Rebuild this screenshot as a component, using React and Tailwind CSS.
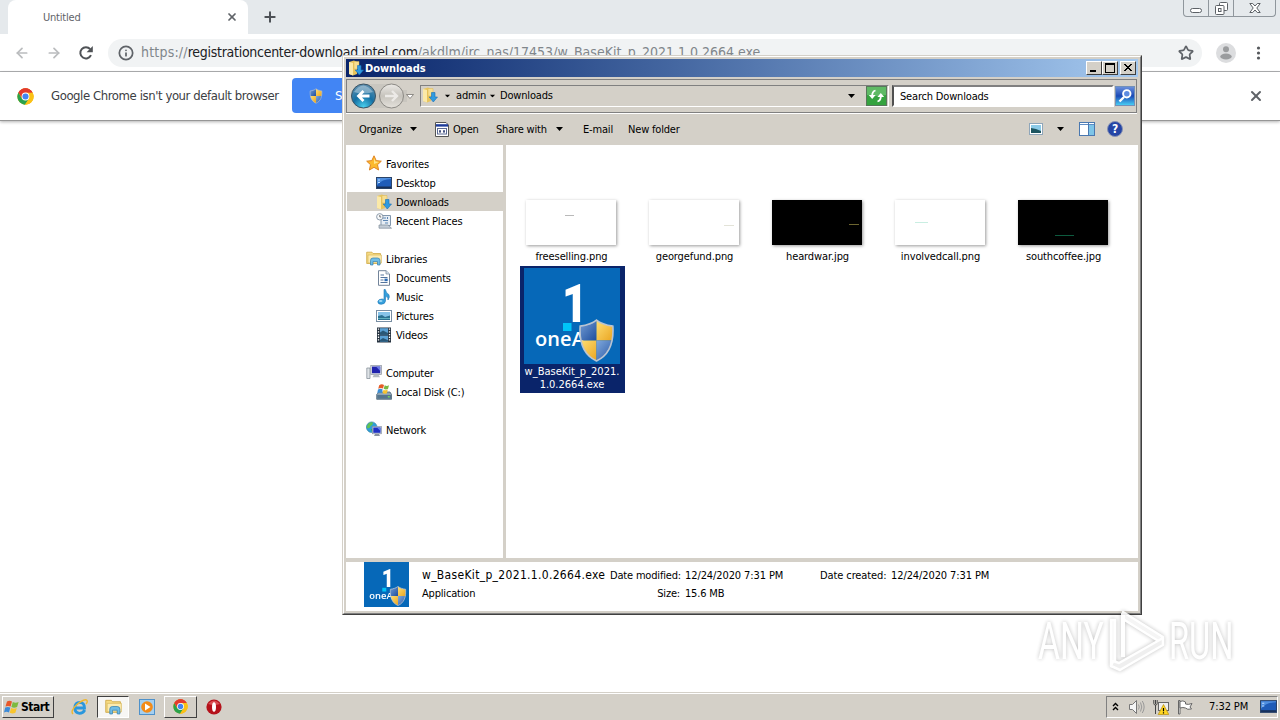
import { ArrowLeft, ArrowRight, Info, Plus, RotateCw, Star, X } from 'lucide-react';

const favorites = [
  { icon: DesktopIcon, label: 'Desktop' },
  { icon: DownloadsIcon, label: 'Downloads', active: true },
  { icon: RecentIcon, label: 'Recent Places' },
];

const libraries = [
  { icon: DocumentIcon, label: 'Documents' },
  { icon: MusicIcon, label: 'Music' },
  { icon: PictureIcon, label: 'Pictures' },
  { icon: VideoIcon, label: 'Videos' },
];

const navGroups = [
  { icon: FavoritesIcon, label: 'Favorites', items: favorites },
  { icon: LibrariesIcon, label: 'Libraries', items: libraries },
  { icon: ComputerIcon, label: 'Computer', items: [{ icon: DiskIcon, label: 'Local Disk (C:)' }] },
  { icon: NetworkIcon, label: 'Network', items: [] },
];

const images = [
  { name: 'freeselling.png', dark: false, mark: 'left-[39px] top-[15px] w-[9px] bg-[#b9b9b9]' },
  { name: 'georgefund.png', dark: false, mark: 'left-[75px] top-[25px] w-[10px] bg-[#e3e3d8]' },
  { name: 'heardwar.jpg', dark: true, mark: 'left-[77px] top-[24px] w-[10px] bg-[#6d6530]' },
  { name: 'involvedcall.png', dark: false, mark: 'left-[20px] top-[22px] w-[13px] bg-[#c9eee2]' },
  { name: 'southcoffee.jpg', dark: true, mark: 'left-[37px] top-[35px] w-[19px] bg-[#0d5a3e]' },
];

function ShieldIcon({ className }) {
  return (
    <svg className={className} viewBox="0 0 36 44" aria-hidden="true">
      <defs>
        <clipPath id="shield">
          <path d="M18 2C13 6 8 7 2 8C1 24 5 36 18 42C31 36 35 24 34 8C28 7 23 6 18 2Z" />
        </clipPath>
        <linearGradient id="shieldBlue" x1="0" y1="0" x2="1" y2="1">
          <stop offset="0" stopColor="#7fa8dc" />
          <stop offset="1" stopColor="#1f4e9e" />
        </linearGradient>
        <linearGradient id="shieldGold" x1="0" y1="0" x2="1" y2="1">
          <stop offset="0" stopColor="#ffe27a" />
          <stop offset="1" stopColor="#e9a21c" />
        </linearGradient>
      </defs>
      <g clipPath="url(#shield)">
        <rect width="18" height="22" fill="url(#shieldBlue)" />
        <rect x="18" width="18" height="22" fill="url(#shieldGold)" />
        <rect y="22" width="18" height="22" fill="url(#shieldGold)" />
        <rect x="18" y="22" width="18" height="22" fill="url(#shieldBlue)" />
        <path d="M0 8Q14 8 18 2L20 0H0Z" fill="#fff" opacity=".25" />
      </g>
      <path
        d="M18 2C13 6 8 7 2 8C1 24 5 36 18 42C31 36 35 24 34 8C28 7 23 6 18 2Z"
        fill="none"
        stroke="#b9c4d2"
        strokeWidth="1.6"
      />
    </svg>
  );
}

function ChromeIcon({ className }) {
  return (
    <svg className={className} viewBox="0 0 48 48" aria-hidden="true">
      <circle cx="24" cy="24" r="23" fill="#fbc116" />
      <path d="M24 24L4.1 12.5A23 23 0 0 1 43.9 12.5H24Z" fill="#e33b2e" />
      <path d="M4.1 12.5A23 23 0 0 0 22.5 47L34 29.5L24 24L14 30Z" fill="#2aa24c" />
      <path d="M43.9 12.5A23 23 0 0 1 22.5 47L34 30L30 14Z" fill="#fbc116" />
      <path d="M4.1 12.5A23 23 0 0 1 43.9 12.5H24L14 29Z" fill="#e33b2e" />
      <circle cx="24" cy="24" r="11" fill="#fff" />
      <circle cx="24" cy="24" r="8.6" fill="#4385f2" />
    </svg>
  );
}

function DownloadsIcon({ className }) {
  return (
    <svg className={className} viewBox="0 0 16 16" aria-hidden="true">
      <path d="M1 2L6 .5L9 2V14L5 15.5L1 14Z" fill="#e9c55c" />
      <path d="M1 2L5 3V15.5L1 14Z" fill="#fbe9a8" />
      <path d="M6 1.5H11V9H6Z" fill="#f7de90" stroke="#d9b552" strokeWidth=".5" />
      <path d="M9.5 5.5H13V10H15.5L11.3 15L7.2 10H9.5Z" fill="#2f9be0" stroke="#1a6fb5" strokeWidth=".6" />
    </svg>
  );
}

function DesktopIcon({ className }) {
  return (
    <svg className={className} viewBox="0 0 16 16" aria-hidden="true">
      <rect x=".5" y="2.5" width="15" height="11" fill="#1f5cb8" stroke="#2b4468" />
      <path d="M1 10Q6 4 15 4V3H1Z" fill="#4f8fe0" />
      <path d="M2 5H4M2 7.5H4" stroke="#bcdcff" />
      <rect x="1" y="11.5" width="14" height="1.6" fill="#182e55" />
    </svg>
  );
}

function RecentIcon({ className }) {
  return (
    <svg className={className} viewBox="0 0 16 16" aria-hidden="true">
      <path d="M5 2.5H14.5V12.5H5Z" fill="#e6edf4" stroke="#8297ad" />
      <path d="M7 5H10M7 7.5H12M9 10H12M11.5 4V6" stroke="#5c86b4" />
      <path d="M3 12H12L15.5 15.2H3Z" fill="#c3ccd6" stroke="#808c99" strokeWidth=".7" />
      <circle cx="3.8" cy="3.8" r="3.2" fill="#f7f9fb" stroke="#8e9cab" />
      <path d="M3.8 2V4H5.2" fill="none" stroke="#555" strokeWidth=".8" />
    </svg>
  );
}

function FavoritesIcon({ className }) {
  return (
    <svg className={className} viewBox="0 0 16 16" aria-hidden="true">
      <path
        d="M8 .8L10.2 5.6L15.3 6.2L11.5 9.7L12.6 15L8 12.3L3.4 15L4.5 9.7L.7 6.2L5.8 5.6Z"
        fill="#fcb92c"
        stroke="#e08524"
        strokeWidth="1"
        strokeLinejoin="round"
      />
      <path d="M8 3L9.3 6.6L13 7L8 9Z" fill="#ffe48c" />
    </svg>
  );
}

function LibrariesIcon({ className }) {
  return (
    <svg className={className} viewBox="0 0 16 16" aria-hidden="true">
      <path d="M.7 2.2H6L7 3.5H14.5V13.5H.7Z" fill="#f7dc83" stroke="#cfa846" strokeWidth=".8" />
      <path d="M2 5H15.4V13H2Z" fill="#fcebb0" stroke="#d8b75c" strokeWidth=".7" />
      <path d="M4.5 15V10.5Q4.5 8 7 8H11.5Q14 8 14 10.5V15H11.5V11.5H7V15Z" fill="#6fbde6" stroke="#3580b0" strokeWidth=".7" />
    </svg>
  );
}

function DocumentIcon({ className }) {
  return (
    <svg className={className} viewBox="0 0 16 16" aria-hidden="true">
      <path d="M2.5 .7H10L13.5 4V15.3H2.5Z" fill="#fff" stroke="#73849a" />
      <path d="M10 .7V4H13.5" fill="#d7e2ee" stroke="#73849a" strokeWidth=".7" />
      <path d="M4.5 5H8M4.5 7.5H11.5M4.5 10H7.5M4.5 12.5H11.5" stroke="#54749c" />
      <rect x="8.5" y="8.6" width="3.2" height="2.6" fill="#2d6cb5" />
    </svg>
  );
}

function MusicIcon({ className }) {
  return (
    <svg className={className} viewBox="0 0 16 16" aria-hidden="true">
      <path
        d="M8 .5H9.3Q10 4 12.8 5.5Q14.2 8 12 11Q12.5 7.8 9.5 7.3V12Q9 15.2 5.3 15.3Q1.7 15.2 1.8 12.7Q2.4 10 6 10Q7.2 10 8 10.5Z"
        fill="#369fdb"
        stroke="#1d75b6"
        strokeWidth=".6"
      />
      <ellipse cx="4.7" cy="12" rx="1.8" ry="1" fill="#9dd8f5" />
    </svg>
  );
}

function PictureIcon({ className }) {
  return (
    <svg className={className} viewBox="0 0 16 16" aria-hidden="true">
      <rect x=".5" y="2.5" width="15" height="11" fill="#fff" stroke="#788ea3" />
      <rect x="2" y="4" width="12" height="8" fill="#86c3e8" />
      <path d="M2 8L6 7L9 9L14 7.5V12H2Z" fill="#2a7191" />
      <path d="M2 10.5H14" stroke="#5fb0bf" />
    </svg>
  );
}

function VideoIcon({ className }) {
  return (
    <svg className={className} viewBox="0 0 16 16" aria-hidden="true">
      <rect x="1" y=".5" width="14" height="15" fill="#263340" />
      <rect x="4" y="1.2" width="8" height="6.2" fill="#5aa0d4" />
      <rect x="4" y="8.6" width="8" height="6.2" fill="#5aa0d4" />
      <path d="M4 5.5L7 3.5L12 6V7.4H4ZM4 13L7 11L12 13.3V14.8H4Z" fill="#285777" />
      <path d="M2.5 1.5V15M13.5 1.5V15" stroke="#fff" strokeWidth="1.3" strokeDasharray="1.3 1.4" />
    </svg>
  );
}

function ComputerIcon({ className }) {
  return (
    <svg className={className} viewBox="0 0 16 16" aria-hidden="true">
      <path d="M.8 4H4V14.5H.8Z" fill="#dfe3e7" stroke="#7d8791" strokeWidth=".7" />
      <rect x="4.8" y="1.5" width="10.7" height="9" fill="#d5d9e0" stroke="#8b93a0" strokeWidth=".7" />
      <rect x="6" y="2.6" width="8.2" height="6.6" fill="#2123ae" />
      <path d="M10 2.6H14.2V7Z" fill="#6c7ae6" />
      <path d="M8 10.6H12.5L14 13.3H6.5Z" fill="#b4bac2" />
    </svg>
  );
}

function DiskIcon({ className }) {
  return (
    <svg className={className} viewBox="0 0 16 16" aria-hidden="true">
      <path d="M.7 10.5L3 8H14L15.5 10.5V15.3H.7Z" fill="#8fa5b5" stroke="#4c6375" strokeWidth=".8" />
      <rect x="1.2" y="11" width="13.8" height="3.8" fill="#55758d" />
      <rect x="11.8" y="12.2" width="2" height="1.2" fill="#77e653" />
      <path d="M3.2 1.2Q5.7 -.5 8 .9L7 4.5Q4.5 3.3 2.2 4.7Z" fill="#e65c27" />
      <path d="M8.8 1.3Q10.8 2.6 13 1.3L12 5Q9.7 6 7.7 4.8Z" fill="#79b844" />
      <path d="M2 5.5Q4.4 4.2 6.7 5.4L5.8 9Q3.5 7.8 1.2 9.2Z" fill="#3b8fd6" />
      <path d="M7.5 5.7Q9.7 6.9 11.8 5.6L10.9 9.2Q8.6 10.3 6.6 9.1Z" fill="#f7c32f" />
    </svg>
  );
}

function NetworkIcon({ className }) {
  return (
    <svg className={className} viewBox="0 0 16 16" aria-hidden="true">
      <circle cx="5.7" cy="6.2" r="5.3" fill="#2f9fd8" stroke="#2c7b9e" strokeWidth=".6" />
      <path d="M2.5 2.5Q5 .5 7 1.5Q7 4 4.5 5Q4 8 1 7Q.8 4.3 2.5 2.5Z" fill="#5fc255" />
      <path d="M5 8L8 8.5L6 11Z" fill="#3aa24f" />
      <rect x="6.3" y="5.5" width="9.2" height="7.3" fill="#cfd6e2" stroke="#7e899c" strokeWidth=".6" />
      <rect x="7.3" y="6.5" width="7.2" height="5.3" fill="#2030c4" />
      <path d="M11 6.5H14.5V10Z" fill="#6584ec" />
      <path d="M9 13H13L14 15H8Z" fill="#8992a0" />
    </svg>
  );
}

function WindowsFlag({ className }) {
  return (
    <svg className={className} viewBox="0 0 16 16" aria-hidden="true">
      <path d="M3 2.6Q5.4 1 8 2.6L6.6 7.6Q4 6.3 1.5 7.6Z" fill="#e8582a" />
      <path d="M8.8 3Q11.4 4.5 14.6 3L13.1 8Q10 9.5 7.4 8Z" fill="#7dba3e" />
      <path d="M1.2 8.6Q3.8 7.2 6.3 8.6L5 13.4Q2.4 12.2 0 13.4Z" fill="#3c8bd8" />
      <path d="M7.1 9Q9.8 10.4 12.8 9L11.4 13.8Q8.6 15.4 5.8 13.8Z" fill="#f9c52c" />
    </svg>
  );
}

function Caret({ className = '' }) {
  return (
    <svg className={`h-1 w-[7px] shrink-0 ${className}`} viewBox="0 0 7 4" aria-hidden="true">
      <path d="M0 0H7L3.5 4Z" fill="#000" />
    </svg>
  );
}

function OneApiIcon({ small }) {
  return (
    <div className={small ? 'h-[45px] w-[45px] overflow-hidden' : 'h-24 w-24'}>
      <div className={small ? 'relative h-24 w-24 origin-top-left scale-[.469] bg-[#0668b8]' : 'relative h-24 w-24 bg-[#0668b8]'}>
        <svg className="absolute inset-0 h-24 w-24" viewBox="0 0 96 96" aria-hidden="true">
          {/* light blue square under the numeral */}
          <rect x="39" y="55" width="8.5" height="8" fill="#00c4f8" />
        </svg>
        <span className="absolute top-[16px] left-[38px] font-['Roboto'] text-[54px] leading-[40px] font-black text-white origin-left scale-x-[.82]">1</span>
        <span className="absolute top-[61px] left-[11px] font-['Open_Sans'] text-[20px] leading-[20px] font-semibold tracking-[0.1px] text-white">
          oneA
        </span>
        <ShieldIcon className="absolute top-[50px] left-[54px] h-[45px] w-[37px]" />
      </div>
    </div>
  );
}

function ChromeWindow() {
  return (
    <div>
      {/* Tab strip */}
      <div className="flex h-[34px] bg-[#e5e9ec]">
        <div className="ml-2 flex h-[34px] w-60 items-center rounded-t-lg bg-white pr-[10px] pl-[35px]">
          <span className="flex-1 pt-[2px] text-[11px] tracking-[-0.2px] text-[#5f6368]">Untitled</span>
          <X className="h-3 w-3 text-[#5f6368]" strokeWidth={3.5} />
        </div>
        <Plus className="mt-[9px] ml-[14px] h-4 w-4 text-[#4d5156]" strokeWidth={3} />
        <div className="mr-[4px] ml-auto flex h-[17px] w-[93px] rounded-b border border-t-0 border-[#8f969c]">
          <div className="flex w-[25px] items-end justify-center border-r border-[#8f969c] pb-[3px]">
            <div className="h-[5px] w-3 rounded-sm border border-[#5c6166] bg-white" />
          </div>
          <div className="flex w-[25px] items-center justify-center border-r border-[#8f969c]">
            <svg className="h-[13px] w-[13px]" viewBox="0 0 13 13" fill="#fff" stroke="#5c6166">
              <rect x="4.5" y=".5" width="8" height="8" rx="1" />
              <rect x=".5" y="3.5" width="8.5" height="9" rx="1" />
              <rect x="3.5" y="6.5" width="2.5" height="3" />
            </svg>
          </div>
          <div className="flex flex-1 items-center justify-center">
            <svg className="h-[10px] w-3" viewBox="0 0 12 10" fill="#fff" stroke="#5c6166">
              <path d="M.8 .5H3.7L6 3L8.3 .5H11.2L7.8 5L11.2 9.5H8.3L6 7L3.7 9.5H.8L4.2 5Z" />
            </svg>
          </div>
        </div>
      </div>

      {/* Address bar */}
      <div className="flex h-[38px] items-center border-b border-[#b0b2b4] bg-white pl-[14px]">
        <ArrowLeft className="h-4 w-4 text-[#babcbe]" strokeWidth={2.6} />
        <ArrowRight className="ml-4 h-4 w-4 text-[#babcbe]" strokeWidth={2.6} />
        <svg className="ml-4 h-4 w-4" viewBox="0 0 16 16" aria-hidden="true">
          <path d="M13 10.2A5.6 5.6 0 1 1 12.2 4.2" fill="none" stroke="#505357" strokeWidth="2" />
          <path d="M14.8 1V7.2H8.6Z" fill="#505357" />
        </svg>
        <div className="ml-[14px] flex h-7 w-[1094px] items-center rounded-full bg-[#f1f3f4] pr-2 pl-[10px]">
          <Info className="h-4 w-4 text-[#5f6368]" strokeWidth={2.6} />
          <span className="ml-[7px] flex-1 text-[14px] whitespace-nowrap text-[#80868b]">
            <span className="tracking-[0.2px]">https://</span>
            <span className="tracking-[-0.28px] text-[#202124]">registrationcenter-download.intel.com</span>
            <span>/akdlm/irc_nas/17453/w_BaseKit_p_2021.1.0.2664.exe</span>
          </span>
          <Star className="h-4 w-4 text-[#5f6368]" strokeWidth={2.6} />
        </div>
        <svg className="ml-[14px] h-5 w-5" viewBox="0 0 20 20" aria-hidden="true">
          <circle cx="10" cy="10" r="10" fill="#dcdddf" />
          <circle cx="10" cy="6.3" r="3" fill="#9a9c9e" />
          <ellipse cx="10" cy="13.5" rx="5.7" ry="3" fill="#9a9c9e" />
        </svg>
        <svg className="ml-[14px] h-4 w-4" viewBox="0 0 16 16" fill="#55585c" aria-hidden="true">
          <circle cx="8.5" cy="3" r="1.6" />
          <circle cx="8.5" cy="8" r="1.6" />
          <circle cx="8.5" cy="13" r="1.6" />
        </svg>
      </div>

      {/* Default browser info bar */}
      <div className="flex h-[49px] items-center border-b border-[#969696] bg-white pl-[17px] shadow-[0_1px_3px_rgba(0,0,0,0.3)]">
        <ChromeIcon className="h-[17px] w-[17px]" />
        <span className="ml-[17px] w-[241px] text-[13px] tracking-[-0.42px] whitespace-nowrap text-[#3c4043]">
          Google Chrome isn't your default browser
        </span>
        <div className="-mt-px flex h-[35px] w-[120px] items-center rounded bg-[#4285f4] pl-4 text-[13px] whitespace-nowrap text-white">
          <ShieldIcon className="h-4 w-4 shrink-0" />
          <span className="ml-[11px]">Set as default</span>
        </div>
        <X className="mr-4 ml-auto h-4 w-4 text-[#5f6368]" strokeWidth={3} />
      </div>
    </div>
  );
}

function CaptionButton({ children, className = '' }) {
  return (
    <div className={`h-[14px] w-4 border border-t-white border-r-[#404040] border-b-[#404040] border-l-white bg-[#d4d0c8] ${className}`}>
      <svg className="h-3 w-[14px]" viewBox="0 0 14 12" fill="none" stroke="#000" shapeRendering="crispEdges">
        {children}
      </svg>
    </div>
  );
}

function AddressRow() {
  return (
    <div className="mt-[2px] mr-px flex h-[34px] items-center border border-[#808080] pl-[4px] shadow-[0_1px_0_#fff]">
      <svg className="h-7 w-[64px]" viewBox="0 0 64 28" aria-hidden="true">
        <defs>
          <radialGradient id="back" cx=".5" cy=".95" r=".9">
            <stop offset="0" stopColor="#49d0ee" />
            <stop offset=".5" stopColor="#1570a4" />
            <stop offset="1" stopColor="#5b8eae" />
          </radialGradient>
          <linearGradient id="forward" x1="0" y1="0" x2="0" y2="1">
            <stop offset="0" stopColor="#eceae6" />
            <stop offset=".5" stopColor="#c6c3bc" />
            <stop offset="1" stopColor="#e5e2dc" />
          </linearGradient>
        </defs>
        <path d="M12 2H40Q46 2 50 8H56V20H50Q46 26 40 26H12Z" fill="#c9c6bf" />
        <circle cx="12.5" cy="14" r="12" fill="url(#back)" stroke="#3b5363" />
        <path d="M3 10Q12 -3 22 10Q12 13 3 10Z" fill="#fff" opacity=".35" />
        <path d="M18.5 14H8M12.5 9L7.5 14L12.5 19" fill="none" stroke="#fff" strokeWidth="2.8" />
        <circle cx="40.5" cy="14" r="12" fill="url(#forward)" stroke="#8b8984" />
        <path d="M34 14H46M41 9L46 14L41 19" fill="none" stroke="#eceae7" strokeWidth="2.4" />
        <path d="M55.5 12.5H62.5L59 16.5Z" fill="#fff" stroke="#77746f" strokeWidth=".8" />
      </svg>
      <div className="ml-[5px] flex h-[22px] w-[469px] items-center border border-t-[#808080] border-r-white border-b-white border-l-[#808080] pr-px">
        <DownloadsIcon className="ml-px h-4 w-4 -translate-y-px" />
        <Caret className="ml-[6px] scale-[.8]" />
        <span className="ml-[5px] w-[28px]">admin</span>
        <Caret className="ml-[5px] scale-[.8]" />
        <span className="ml-[4px] flex-1">Downloads</span>
        <Caret className="mr-[11px]" />
        <svg className="h-5 w-[21px]" viewBox="0 0 21 20" aria-hidden="true">
          <rect x=".5" y=".5" width="20" height="19" fill="#35a33f" stroke="#57775a" />
          <path d="M1 1H20V9Q10 11 1 9Z" fill="#7cc97f" opacity=".6" />
          <path d="M9.5 4.5Q6 5.5 6.2 10" fill="none" stroke="#fff" strokeWidth="1.8" />
          <path d="M2.8 9H9.6L6.2 13Z" fill="#fff" />
          <path d="M11.5 15.5Q15 14.5 14.8 10" fill="none" stroke="#fff" strokeWidth="1.8" />
          <path d="M11.4 11H18.2L14.8 7Z" fill="#fff" />
        </svg>
      </div>
      <div className="ml-[3px] flex h-[22px] w-[222px] items-center border-2 border-t-[#808080] border-r-white border-b-white border-l-[#505050] bg-white pt-[2px] pl-[6px]">
        Search Downloads
      </div>
      <svg className="ml-px h-5 w-5" viewBox="0 0 20 20" aria-hidden="true">
        <defs>
          <linearGradient id="search" x1="0" y1="0" x2="0" y2="1">
            <stop offset="0" stopColor="#6d92dd" />
            <stop offset=".5" stopColor="#1b49b6" />
            <stop offset="1" stopColor="#49d3f7" />
          </linearGradient>
        </defs>
        <rect x=".5" y=".5" width="19" height="19" fill="url(#search)" stroke="#7290b8" />
        <circle cx="11.8" cy="7.8" r="3.7" fill="#5d8be0" stroke="#fff" strokeWidth="1.9" />
        <path d="M9 11L4.5 15.5" stroke="#fff" strokeWidth="2.4" />
      </svg>
    </div>
  );
}

function CommandBar() {
  return (
    <div className="flex h-8 items-center pl-[13px] whitespace-nowrap">
      <span className="w-[51px] pt-[2px]">Organize</span>
      <Caret />
      <svg className="mr-1 ml-[18px] h-[15px] w-[14px]" viewBox="0 0 14 15" aria-hidden="true">
        <path d="M.5 .5H11L13.5 3V14.5H.5Z" fill="#fff" stroke="#555" />
        <rect x="1" y="2.2" width="12" height="2.4" fill="#1d3b9a" />
        <rect x="2.5" y="6.5" width="9" height="5.5" fill="#fff" stroke="#5b6a94" />
        <path d="M4 9.2H6M8 9.2H10M5 8V11M9 8V11" stroke="#24336b" />
      </svg>
      <span className="w-[43px] pt-[2px]">Open</span>
      <span className="w-[60px] pt-[2px]">Share with</span>
      <Caret />
      <span className="ml-[20px] w-[45px] pt-[2px]">E-mail</span>
      <span className="flex-1 pt-[2px]">New folder</span>
      <svg className="h-3 w-[14px]" viewBox="0 0 14 12" aria-hidden="true">
        <rect x=".5" y=".5" width="13" height="11" fill="#fff" stroke="#8fa6ba" />
        <rect x="2" y="2" width="10" height="7" fill="#8ccbe8" />
        <path d="M2 5L7 6L12 8V10H2Z" fill="#1d5560" />
      </svg>
      <Caret className="mr-[15px] ml-[14px]" />
      <svg className="h-[14px] w-4" viewBox="0 0 16 14" aria-hidden="true">
        <rect x=".5" y=".5" width="15" height="13" fill="#fff" stroke="#4a78b0" />
        <path d="M1 2.5H15" stroke="#5d8cc4" />
        <rect x="10" y="3" width="5" height="10" fill="#7ec5e8" />
        <path d="M9.5 1V13" stroke="#4a78b0" />
      </svg>
      <div className="mr-[15px] ml-3 flex h-4 w-4 items-center justify-center rounded-full border border-[#8792b5] bg-[#2545a5] text-[12px] font-bold text-white">
        ?
      </div>
    </div>
  );
}

function NavPane() {
  return (
    <div className="w-[157px] shrink-0 bg-white pt-[9px] pl-px">
      {navGroups.map((group) => (
        <div key={group.label} className="mb-[19px]">
          <div className="flex h-[19px] items-center pt-[3px] pl-[19px]">
            <group.icon className="mr-1 h-4 w-4 -translate-y-[2px]" />
            {group.label}
          </div>
          {group.items.map((item) => (
            <div
              key={item.label}
              className={`flex h-[19px] items-center pt-[3px] pl-[29px] ${item.active ? 'bg-[#d4d0c8]' : ''}`}
            >
              <item.icon className="mr-1 h-4 w-4 -translate-y-px" />
              {item.label}
            </div>
          ))}
        </div>
      ))}
    </div>
  );
}

function FilePane() {
  return (
    <div className="flex-1 border-l-[3px] border-[#d4d0c8] bg-white pt-[55px] pl-[4px]">
      <div className="grid w-[615px] grid-cols-5">
        {images.map((file) => (
          <div key={file.name} className="flex h-[66px] flex-col items-center">
            <div
              className={`relative mr-px h-[45px] w-[90px] shadow-[1px_1px_3px_rgba(0,0,0,0.4)] ${file.dark ? 'bg-black' : 'bg-white'}`}
            >
              <div className={`absolute h-px ${file.mark}`} />
            </div>
            <span className="mt-[5px] leading-[14px] tracking-[-0.1px]">{file.name}</span>
          </div>
        ))}
        <div className="ml-[10px] flex h-[127px] w-[105px] flex-col items-center bg-[#0a246a] pt-[2px] pr-px text-center text-white">
          <OneApiIcon />
          <span className="mt-px text-[11px] leading-[13px] tracking-normal">
            w_BaseKit_p_2021.
            <br />
            1.0.2664.exe
          </span>
        </div>
      </div>
    </div>
  );
}

function DetailsPane() {
  return (
    <div className="flex h-[49px] bg-white pl-[18px] whitespace-nowrap">
      <OneApiIcon small />
      <div className="ml-[13px] grid h-9 grid-cols-[188px_75px_135px_71px_110px] grid-rows-[18px_18px] items-center pt-[5px]">
        <span className="pb-[2px] text-[12px] tracking-[0.32px]">w_BaseKit_p_2021.1.0.2664.exe</span>
        <span>Date modified:</span>
        <span className="tracking-[-0.1px]">12/24/2020 7:31 PM</span>
        <span className="tracking-[-0.1px]">Date created:</span>
        <span className="tracking-[-0.1px]">12/24/2020 7:31 PM</span>
        <span>Application</span>
        <span className="pr-[5px] text-right">Size:</span>
        <span>15.6 MB</span>
      </div>
    </div>
  );
}

function ExplorerWindow() {
  return (
    <div className="absolute top-[55px] left-[342px] h-[560px] w-[800px] border border-t-[#d4d0c8] border-r-[#404040] border-b-[#404040] border-l-[#d4d0c8] bg-[#d4d0c8] text-[11px] tracking-[-0.18px] text-black">
      <div className="flex h-full flex-col border border-t-white border-r-[#808080] border-b-[#808080] border-l-white p-[2px]">
        <div className="flex h-[18px] shrink-0 items-center bg-linear-to-r from-[#0a246a] to-[#a6caf0] pr-[2px] pl-[2px]">
          <DownloadsIcon className="h-4 w-4" />
          <span className="ml-px flex-1 pt-[2px] font-bold tracking-[-0.05px] text-white">Downloads</span>
          <CaptionButton>
            <path d="M3 9H9M3 8H9" />
          </CaptionButton>
          <CaptionButton>
            <path d="M2.5 1.5H11.5V10.5H2.5ZM2 2.5H12" />
          </CaptionButton>
          <CaptionButton className="ml-[2px]">
            <path d="M3 2L10 9M4 2L11 9M10 2L3 9M11 2L4 9" />
          </CaptionButton>
        </div>
        <AddressRow />
        <CommandBar />
        <div className="flex h-[413px] shrink-0">
          <NavPane />
          <FilePane />
        </div>
        <div className="h-1 shrink-0 bg-[#d4d0c8]" />
        <DetailsPane />
      </div>
    </div>
  );
}

function Watermark() {
  return (
    <div className="absolute top-[609px] left-[1038px] flex h-16 items-center font-['Roboto'] text-[51px] leading-none text-white opacity-90 drop-shadow-[0_0_2px_rgba(0,0,0,0.28)]">
      <span className="w-[68px] origin-left scale-x-[.66] pt-px whitespace-nowrap">ANY</span>
      <svg className="h-16 w-[62px]" viewBox="0 0 62 64" fill="none" stroke="#fff" strokeLinejoin="round" aria-hidden="true">
        {/* overlapping bands of the play mark */}
        <path d="M5 11V57H9V11Z" strokeWidth="2.5" fill="#fafafa" />
        <path d="M17 3L57 28L54 33L17 10Z" strokeWidth="2.5" fill="#f4f4f4" />
        <path d="M7 52L13 54L57 29V36L14 61L5 57Z" strokeWidth="2.5" fill="#eeeeee" />
        <path d="M17 4V48" strokeWidth="4" />
      </svg>
      <span className="ml-px w-[66px] origin-left scale-x-[.64] pt-px whitespace-nowrap">RUN</span>
    </div>
  );
}

function Taskbar() {
  return (
    <div className="absolute bottom-0 left-0 flex h-7 w-full items-center border-t border-[#d4d0c8] bg-[#d4d0c8] text-[11px] shadow-[inset_0_1px_0_#fff]">
      <div className="ml-[2px] flex h-[22px] w-[52px] items-center border border-t-white border-r-[#404040] border-b-[#404040] border-l-white font-bold text-black">
        <WindowsFlag className="ml-px h-4 w-4 shrink-0" />
        <span className="ml-px text-[12px] tracking-[-0.5px]">Start</span>
      </div>
      <svg className="ml-[17px] h-4 w-[17px]" viewBox="0 0 17 16" fill="none" aria-hidden="true">
        <path d="M13.8 11Q12 14.3 8.5 14.3Q3.8 13.8 3.8 8.8Q4 3.6 8.7 3.4Q13.5 3.6 13.5 9H5" stroke="#2a97dd" strokeWidth="2.8" />
        <path d="M2 15Q-1 12 6 5.5Q14 -1 16 1.5Q16.8 3 15 5" stroke="#efb72f" strokeWidth="1.4" />
      </svg>
      <div className="ml-[9px] flex h-[22px] w-8 items-center justify-center border border-t-[#404040] border-r-white border-b-white border-l-[#404040] bg-[#f7f6f4]">
        <LibrariesIcon className="h-[17px] w-[17px]" />
      </div>
      <svg className="ml-[10px] h-4 w-4" viewBox="0 0 16 16" aria-hidden="true">
        <rect x=".5" y=".5" width="15" height="15" fill="#a4cff0" stroke="#4e91ca" />
        <circle cx="8" cy="8" r="5.8" fill="#f38b18" />
        <path d="M6 4.5L11.5 8L6 11.5Z" fill="#fff" />
      </svg>
      <div className="ml-[9px] flex h-[22px] w-[33px] items-center justify-center border border-t-white border-r-[#404040] border-b-[#404040] border-l-white">
        <ChromeIcon className="h-[15px] w-[15px]" />
      </div>
      <svg className="ml-[9px] h-4 w-4" viewBox="0 0 16 16" aria-hidden="true">
        <circle cx="8" cy="8" r="7.6" fill="#b5121b" />
        <path d="M2 5Q8 -2 14 5Q8 7 2 5Z" fill="#e8666a" opacity=".7" />
        <ellipse cx="8" cy="8" rx="2" ry="4.8" fill="#fff" />
      </svg>

      {/* Notification area */}
      <div className="mr-[2px] ml-auto flex h-[22px] w-[172px] items-center border border-t-[#808080] border-r-white border-b-white border-l-[#808080]">
        <svg className="ml-[5px] h-[9px] w-[7px]" viewBox="0 0 7 9" fill="none" stroke="#000" strokeWidth="1.4">
          <path d="M1 4L3.5 1.5L6 4M1 8L3.5 5.5L6 8" />
        </svg>
        <svg className="ml-[10px] h-4 w-4" viewBox="0 0 16 16" fill="none" stroke="#777" aria-hidden="true">
          <path d="M.5 5.5H3.5L7.5 1.5V14.5L3.5 10.5H.5Z" fill="#f5f5f5" />
          <path d="M9.5 5.5Q11 8 9.5 10.5M11.5 3.5Q14 8 11.5 12.5M13.3 2Q17 8 13.3 14" stroke="#999" />
        </svg>
        <svg className="ml-2 h-4 w-4" viewBox="0 0 16 16" aria-hidden="true">
          <rect x="5.5" y="3.5" width="10" height="8" fill="#eee" stroke="#666" />
          <path d="M.8 1V4.5Q.8 6 2.5 6V15M4.2 1V4.5Q4.2 6 2.5 6M2.5 1V5" fill="none" stroke="#444" />
          <path d="M10.5 5.5L15.8 15.5H5.2Z" fill="#ffd621" stroke="#b68c10" strokeWidth=".7" />
          <path d="M10.5 9V12.3M10.5 13.3V14.5" stroke="#000" strokeWidth="1.2" />
        </svg>
        <svg className="ml-[8px] h-4 w-4" viewBox="0 0 16 16" fill="#fff" stroke="#666" aria-hidden="true">
          <path d="M1.5 1.5H3V15H1.5Z" />
          <path d="M3 2.5Q6 1 8.5 3V5Q11 6 15 4.5L13 8L14.5 10Q10 11 8.5 9Q6 8 3 9Z" />
        </svg>
        <span className="ml-4 w-[51px] pt-[2px] tracking-[-0.1px] whitespace-nowrap text-black">7:32 PM</span>
        <DesktopIcon className="h-[17px] w-[17px] shrink-0" />
      </div>
    </div>
  );
}

export default function App() {
  return (
    <div className="relative h-[720px] w-[1280px] overflow-hidden bg-white font-['DejaVu_Sans_Condensed','DejaVu_Sans',sans-serif]">
      <ChromeWindow />
      <ExplorerWindow />
      <Watermark />
      <Taskbar />
    </div>
  );
}
